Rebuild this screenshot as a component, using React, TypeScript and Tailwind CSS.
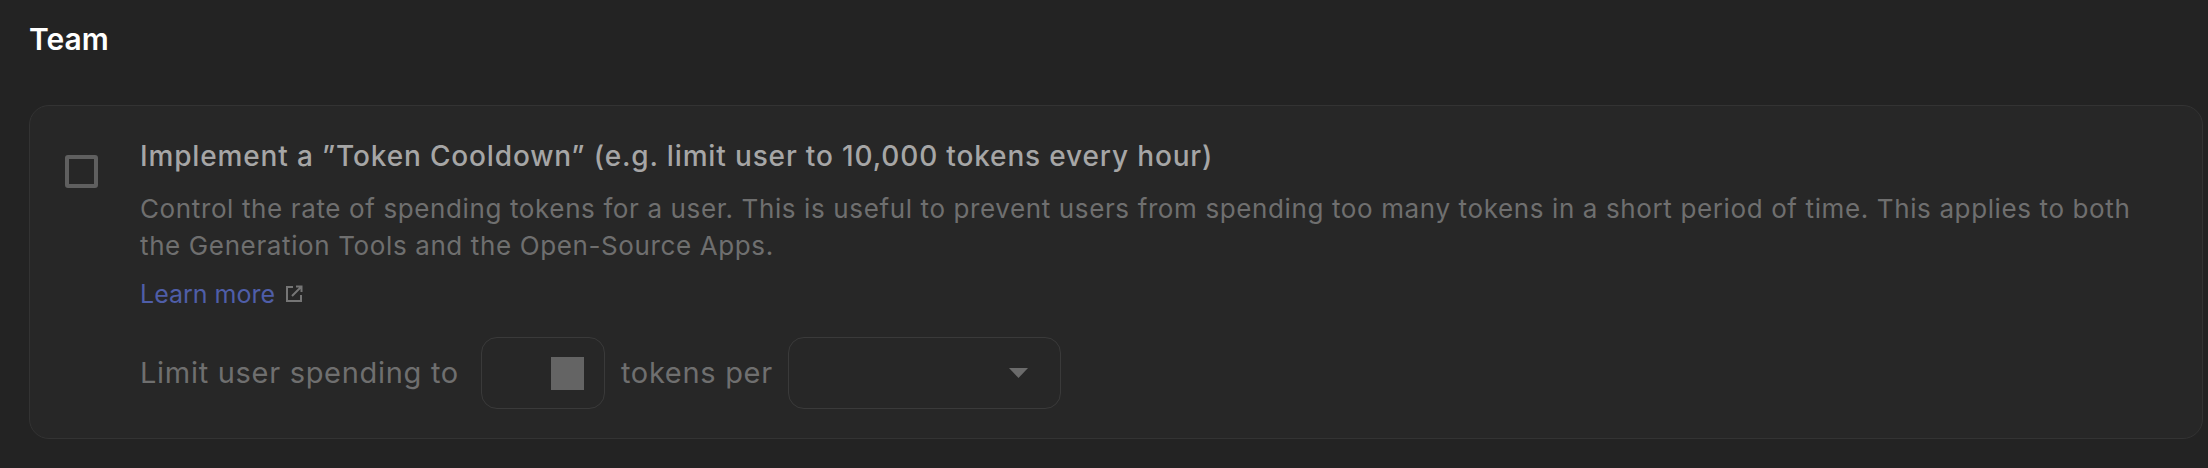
export default function App() {
  return (
    <div className="h-[468px] w-[2208px] overflow-hidden bg-[#232323] pl-[29px] pr-[5px] pt-[21px] font-['Inter',sans-serif]">
      <h1 className="text-[30px] leading-[36px] font-semibold text-white">Team</h1>

      <div className="mt-[48px] flex h-[334px] rounded-[20px] border border-[#333333] bg-[#272727] pl-[35px] pt-[32px]">
        <div className="mt-[17px] h-[33px] w-[33px] shrink-0 rounded-[3px] border-[4px] border-[#5f5f5f]" />

        <div className="ml-[42px] flex flex-col">
          <h2 className="text-[28px] leading-[36px] font-medium tracking-[0.85px] text-[#a6a6a6]">
            Implement a ”Token Cooldown” (e.g. limit user to 10,000 tokens every hour)
          </h2>
          <p className="mt-[16px] w-[2010px] text-[26px] leading-[37px] tracking-[0.62px] text-[#6f6f6f]">
            Control the rate of spending tokens for a user. This is useful to prevent users from spending too many tokens in a short period of time. This applies to both the Generation Tools and the Open-Source Apps.
          </p>
          <div className="mt-[14px] flex items-center gap-[10px]">
            <a className="text-[25px] leading-[32px] text-[#4f5ea8]">Learn more</a>
            <svg viewBox="0 0 18 18" className="h-[18px] w-[18px]" fill="none" stroke="#757575" strokeWidth="2">
              <path d="M8 2H2v14h14v-6" />
              <path d="M7 11 16 2M11 1.500h5.500V7" />
            </svg>
          </div>
          <div className="mt-[27px] flex items-center">
            <span className="text-[29px] tracking-[0.7px] text-[#6f6f6f]">Limit user spending to</span>
            <div className="ml-[22px] flex h-[72px] w-[124px] items-center justify-end rounded-[16px] border border-[#3a3a3a] pr-[20px]">
              <div className="h-[33px] w-[33px] bg-[#646464]" />
            </div>
            <span className="ml-[16px] text-[29px] tracking-[0.7px] text-[#6f6f6f]">tokens per</span>
            <div className="ml-[15px] flex h-[72px] w-[273px] items-center justify-end rounded-[16px] border border-[#3a3a3a] pr-[32px]">
              <svg viewBox="0 0 19 10" className="h-[10px] w-[19px]">
                <path d="M0 0h19l-9.5 10z" fill="#6b6b6b" />
              </svg>
            </div>
          </div>
        </div>
      </div>
    </div>
  )
}
